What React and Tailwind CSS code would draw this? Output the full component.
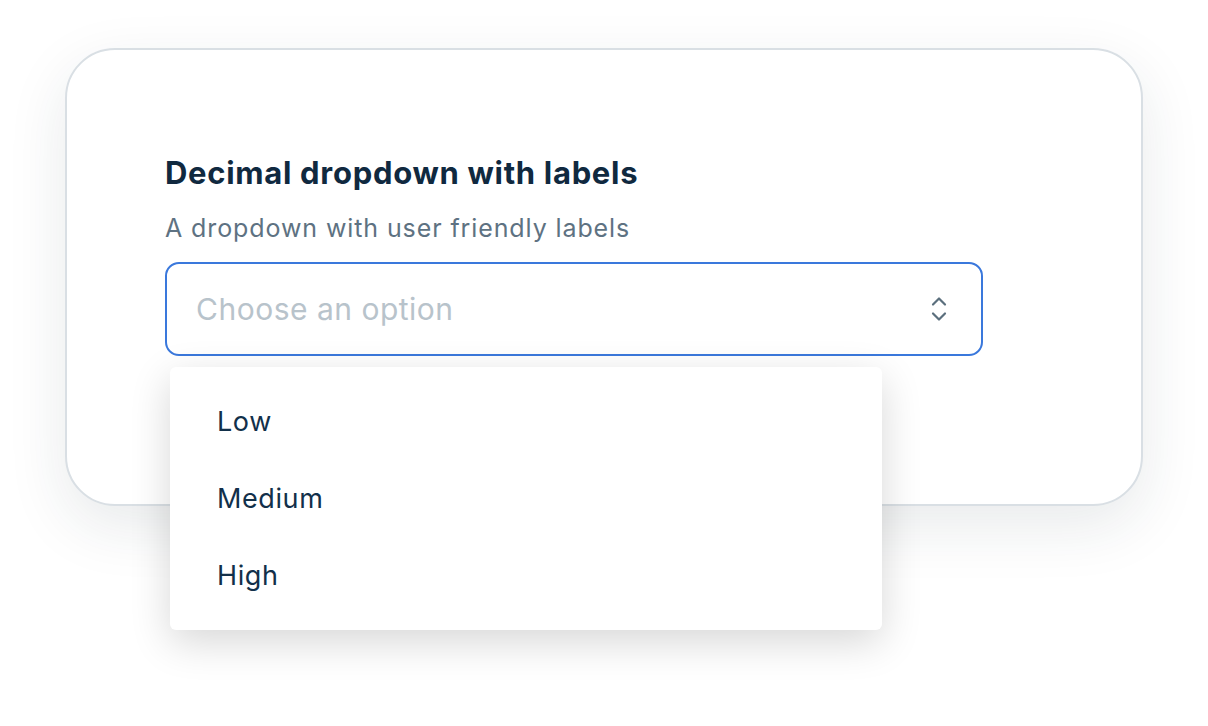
import React from 'react';

const UpDown = () => (
    <svg width="18" height="28" viewBox="0 0 18 28" fill="none" stroke="#5b6f7d" strokeWidth="2.2" strokeLinecap="round" strokeLinejoin="round">
        <path d="M3 9.5 9 3.5l6 6" />
        <path d="M3 18.5l6 6 6-6" />
    </svg>
);

export default function App() {
    const options = ['Low', 'Medium', 'High'];

    return (
        <div className="w-[1208px] h-[726px] bg-white overflow-hidden font-['Inter',sans-serif]">
            <div className="pt-[48px] pl-[65px]">
                <div className="w-[1078px] h-[458px] bg-white rounded-[50px] border-2 border-[#d9dfe4] shadow-[0_20px_60px_rgba(30,45,60,0.10)] pt-[104px] pl-[98px]">
                    <h2 className="text-[31px] leading-[38px] font-bold text-[#10293f] tracking-[0.7px]">
                        Decimal dropdown with labels
                    </h2>
                    <p className="mt-[19px] text-[25px] leading-[34px] text-[#5e7282] tracking-[0.9px]">
                        A dropdown with user friendly labels
                    </p>
                    <div className="relative mt-[17px] w-[818px]">
                        <div className="h-[94px] rounded-[14px] border-2 border-[#3a78dc] bg-white flex items-center justify-between pl-[29px] pr-[33px]">
                            <span className="text-[30px] text-[#b8c3cb] tracking-[0.5px]">Choose an option</span>
                            <UpDown />
                        </div>
                        <div className="absolute left-[5px] top-[105px] w-[712px] h-[263px] bg-white rounded-[6px] shadow-[0_12px_40px_rgba(0,0,0,0.16)] z-10 flex flex-col pt-[17px]">
                            {options.map((o) => (
                                <div key={o} className="h-[77px] flex items-center pl-[47px] text-[27px] text-[#12304a] tracking-[0.6px]">
                                    {o}
                                </div>
                            ))}
                        </div>
                    </div>
                </div>
            </div>
        </div>
    );
}
